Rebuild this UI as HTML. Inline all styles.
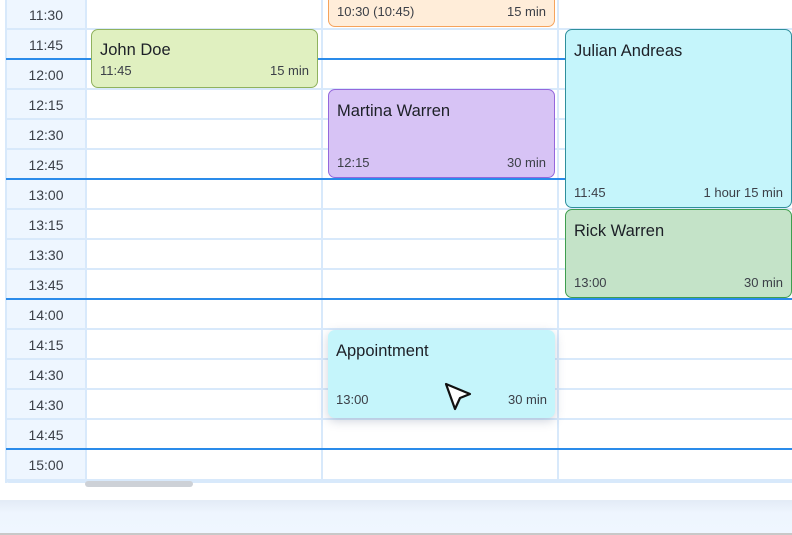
<!DOCTYPE html>
<html><head><meta charset="utf-8"><style>
*{margin:0;padding:0;box-sizing:border-box}
body{width:792px;height:535px;overflow:hidden;background:#fff;font-family:"Liberation Sans",sans-serif;position:relative}
.abs{position:absolute}
.tc{position:absolute;left:6px;width:80px;top:0;height:481px;background:#eef6ff}
.lbl{position:absolute;left:6px;width:80px;text-align:center;font-size:14px;color:#3a3f47;height:30px;line-height:30px}
.h{position:absolute;left:6px;right:0;height:2px;background:#d8e9fb}
.hb{position:absolute;left:6px;right:0;height:2px;background:#2a8bea}
.v{position:absolute;top:0;width:2px;height:481px;background:#d8e9fb}
.ev{position:absolute;border-radius:7px;border:1px solid}
.ev .t{position:absolute;left:8px;top:12px;font-size:16.5px;color:#1d2027}
.ev .s{position:absolute;left:8px;bottom:7px;font-size:13px;color:#3c4048}
.ev .d{position:absolute;right:8px;bottom:7px;font-size:13px;color:#3c4048}
</style></head><body>
<div class="tc"></div>
<div class="abs" style="left:5px;top:0;width:2px;height:483px;background:#d8e9fb"></div>
<div class="abs" style="left:5px;top:479px;right:0;height:4px;background:#d8e9fb;border-bottom-left-radius:6px"></div>
<div class="v" style="left:85px"></div>
<div class="v" style="left:321px"></div>
<div class="v" style="left:557px"></div>
<div class="h" style="top:28px"></div>
<div class="hb" style="top:58px"></div>
<div class="h" style="top:88px"></div>
<div class="h" style="top:118px"></div>
<div class="h" style="top:148px"></div>
<div class="hb" style="top:178px"></div>
<div class="h" style="top:208px"></div>
<div class="h" style="top:238px"></div>
<div class="h" style="top:268px"></div>
<div class="hb" style="top:298px"></div>
<div class="h" style="top:328px"></div>
<div class="h" style="top:358px"></div>
<div class="h" style="top:388px"></div>
<div class="h" style="top:418px"></div>
<div class="hb" style="top:448px"></div>
<div class="lbl" style="top:0">11:30</div>
<div class="lbl" style="top:30px">11:45</div>
<div class="lbl" style="top:60px">12:00</div>
<div class="lbl" style="top:90px">12:15</div>
<div class="lbl" style="top:120px">12:30</div>
<div class="lbl" style="top:150px">12:45</div>
<div class="lbl" style="top:180px">13:00</div>
<div class="lbl" style="top:210px">13:15</div>
<div class="lbl" style="top:240px">13:30</div>
<div class="lbl" style="top:270px">13:45</div>
<div class="lbl" style="top:300px">14:00</div>
<div class="lbl" style="top:330px">14:15</div>
<div class="lbl" style="top:360px">14:30</div>
<div class="lbl" style="top:390px">14:30</div>
<div class="lbl" style="top:420px">14:45</div>
<div class="lbl" style="top:450px">15:00</div>

<div class="ev" style="left:328px;top:-10px;width:227px;height:37px;background:#ffedd9;border-color:#f5a35c"><div class="s">10:30 (10:45)</div><div class="d">15 min</div></div>
<div class="ev" style="left:91px;top:29px;width:227px;height:59px;background:#e0f0c0;border-color:#8fb25e"><div class="t" style="top:11px">John Doe</div><div class="s" style="bottom:9px">11:45</div><div class="d" style="bottom:9px">15 min</div></div>
<div class="ev" style="left:328px;top:89px;width:227px;height:89px;background:#d7c3f5;border-color:#9467dc"><div class="t">Martina Warren</div><div class="s">12:15</div><div class="d">30 min</div></div>
<div class="ev" style="left:565px;top:29px;width:227px;height:179px;background:#c5f5fb;border-color:#2f8f9c"><div class="t">Julian Andreas</div><div class="s">11:45</div><div class="d">1 hour 15 min</div></div>
<div class="ev" style="left:565px;top:209px;width:227px;height:89px;background:#c4e3c8;border-color:#3f9e4f"><div class="t">Rick Warren</div><div class="s">13:00</div><div class="d">30 min</div></div>
<div class="ev" style="left:328px;top:330px;width:227px;height:88px;background:#c5f5fb;border:none;box-shadow:0 3px 10px rgba(60,80,120,0.25)"><div class="t">Appointment</div><div class="s" style="bottom:11px">13:00</div><div class="d" style="bottom:11px">30 min</div></div>
<svg class="abs" style="left:0;top:0" width="792" height="535"><polygon points="446,384 470,394 460,398 455,409" fill="#fff" stroke="#111" stroke-width="2.2" stroke-linejoin="round"/></svg>

<div class="abs" style="left:85px;top:481px;width:108px;height:6px;border-radius:3px;background:#cdd1d7"></div>
<div class="abs" style="left:0;top:500px;width:792px;height:33px;background:linear-gradient(#e3ebf6,#eef5fe 40%,#eff6ff)"></div>
<div class="abs" style="left:0;top:533px;width:792px;height:2px;background:#c8c8c8"></div>
</body></html>
